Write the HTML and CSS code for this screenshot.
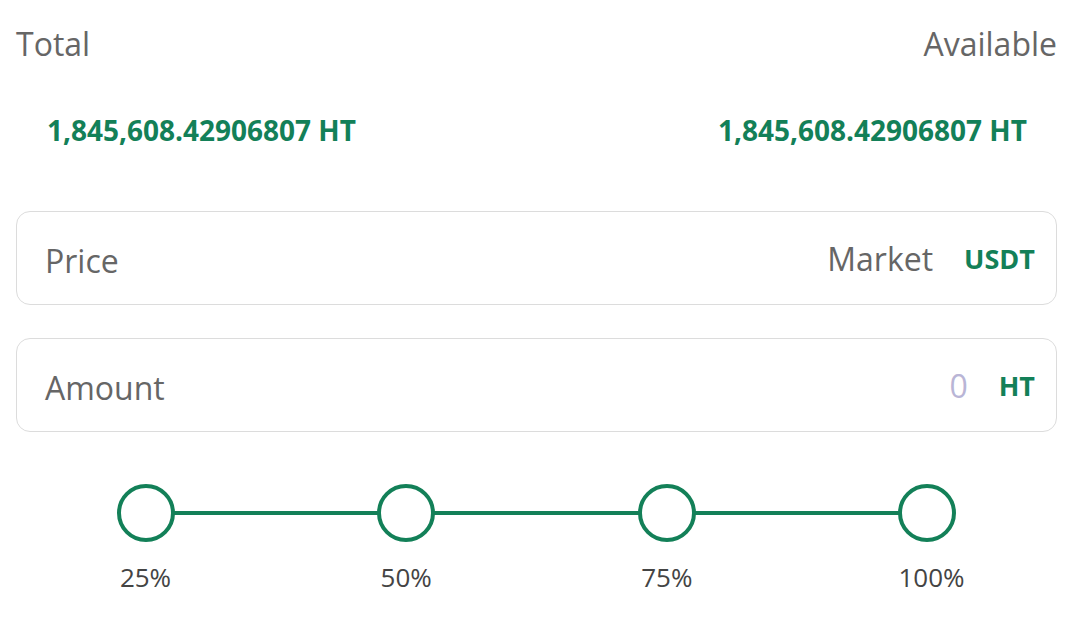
FILE: index.html
```html
<!DOCTYPE html>
<html>
<head>
<meta charset="utf-8">
<link rel="stylesheet" href="styles.css">
</head>
<body>
<div class="panel">
  <div class="row labels">
    <span>Total</span>
    <span>Available</span>
  </div>
  <div class="row values">
    <span>1,845,608.42906807 HT</span>
    <span>1,845,608.42906807 HT</span>
  </div>
  <div class="field field-price">
    <span class="field-label">Price</span>
    <span class="field-right">
      <span class="field-value">Market</span>
      <span class="field-unit">USDT</span>
    </span>
  </div>
  <div class="field field-amount">
    <span class="field-label">Amount</span>
    <span class="field-right">
      <span class="field-value placeholder">0</span>
      <span class="field-unit">HT</span>
    </span>
  </div>
  <div class="slider">
    <div class="track">
      <span class="line"></span>
      <span class="knob"></span>
      <span class="knob"></span>
      <span class="knob"></span>
      <span class="knob"></span>
    </div>
    <div class="ticks">
      <span>25%</span>
      <span>50%</span>
      <span>75%</span>
      <span>100%</span>
    </div>
  </div>
</div>
</body>
</html>
```
FILE: styles.css
```css
html, body {
  margin: 0;
  padding: 0;
  background: #ffffff;
}
body {
  font-family: "Open Sans", "Noto Sans", "Liberation Sans", sans-serif;
  color: #666666;
}
.panel {
  padding: 0 13px 0 16px;
}
.row {
  display: flex;
  justify-content: space-between;
  align-items: center;
}
.labels {
  height: 86px;
  font-size: 32px;
  color: #666666;
}
.values {
  height: 88px;
  padding: 0 30px 0 31px;
  font-size: 28px;
  font-weight: 700;
  color: #138058;
}
.field {
  display: flex;
  justify-content: space-between;
  align-items: center;
  height: 92px;
  border: 1px solid #dcdcdc;
  border-radius: 14px;
  padding: 0 21px 0 28px;
  margin-top: 37px;
}
.field-amount {
  margin-top: 33px;
}
.field-label {
  font-size: 32px;
  color: #666666;
  padding-top: 5px;
}
.field-right {
  display: flex;
  align-items: center;
  gap: 31px;
}
.field-value {
  font-size: 32px;
  color: #666666;
  padding-top: 1px;
}
.placeholder {
  color: #b9b5d6;
}
.field-unit {
  font-size: 27px;
  font-weight: 700;
  color: #138058;
}
.slider {
  width: 840px;
  margin: 52px auto 0;
}
.track {
  position: relative;
  display: flex;
  justify-content: space-between;
  align-items: center;
  height: 58px;
}
.line {
  position: absolute;
  left: 29px;
  right: 29px;
  top: 27px;
  height: 4px;
  background: #138058;
}
.knob {
  position: relative;
  width: 50px;
  height: 50px;
  border: 4px solid #138058;
  border-radius: 50%;
  background: #ffffff;
}
.ticks {
  display: flex;
  justify-content: space-between;
  margin-top: 17px;
  font-size: 26px;
  color: #444444;
}
.ticks span {
  width: 58px;
  text-align: center;
  white-space: nowrap;
}
```
